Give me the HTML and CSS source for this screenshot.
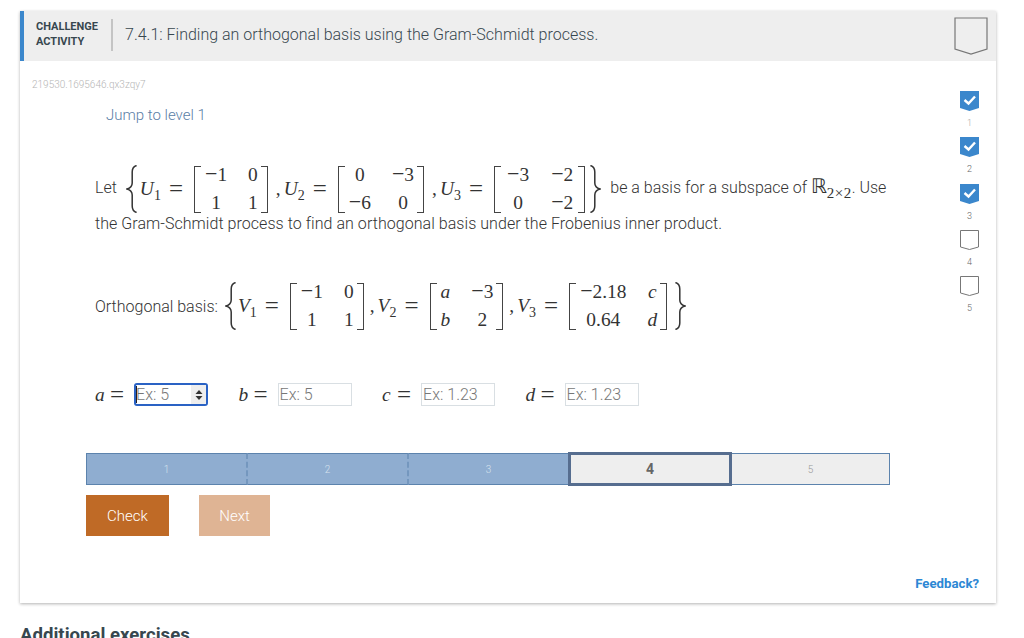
FILE: index.html
```html
<!DOCTYPE html>
<html lang="en">
<head>
<meta charset="utf-8">
<title>Challenge activity 7.4.1</title>
<link rel="stylesheet" href="styles.css">
</head>
<body>
<svg class="defs" width="0" height="0" aria-hidden="true">
  <symbol id="lbrace" viewBox="0 0 12 48" preserveAspectRatio="none"><path d="M10.6 .5C7.5 1.5 6.2 3.5 6.2 7V18C6.2 21 4.5 23 1 24C4.5 25 6.2 27 6.2 30V41C6.2 44.500 7.500 46.500 10.600 47.500" fill="none" stroke="#333" stroke-width="1.5"/></symbol>
  <symbol id="rbrace" viewBox="0 0 12 48" preserveAspectRatio="none"><path d="M1.400 .5C4.500 1.500 5.800 3.500 5.800 7V18C5.800 21 7.500 23 11 24C7.500 25 5.800 27 5.800 30V41C5.800 44.500 4.500 46.500 1.400 47.500" fill="none" stroke="#333" stroke-width="1.500"/></symbol>
</svg>
<main class="page">
  <section class="card">
    <header class="card-head">
      <div class="kind">CHALLENGE<br>ACTIVITY</div>
      <h1 class="title">7.4.1: Finding an orthogonal basis using the Gram-Schmidt process.</h1>
      <svg class="mark-big" viewBox="0 0 34 38"><path d="M1 1H33V32L17 37L1 32Z" fill="none" stroke="#777" stroke-width="1.200"/></svg>
    </header>
    <div class="card-body">
      <div class="content">
        <div class="code">219530.1695646.qx3zqy7</div>
        <div class="jump">Jump to level 1</div>
        <div class="stmt">
          <div class="line line-first">
            <span class="word">Let</span>
            <svg class="brace brace-l"><use href="#lbrace"/></svg>
            <span class="var">U<sub>1</sub></span><span class="eq">=</span>
            <span class="matrix">
              <span class="cell"><span class="minus">−</span>1</span><span class="cell">0</span>
              <span class="cell">1</span><span class="cell">1</span>
            </span>
            <span class="sep">,</span><span class="var">U<sub>2</sub></span><span class="eq">=</span>
            <span class="matrix">
              <span class="cell">0</span><span class="cell"><span class="minus">−</span>3</span>
              <span class="cell"><span class="minus">−</span>6</span><span class="cell">0</span>
            </span>
            <span class="sep">,</span><span class="var">U<sub>3</sub></span><span class="eq">=</span>
            <span class="matrix matrix-wide">
              <span class="cell"><span class="minus">−</span>3</span><span class="cell"><span class="minus">−</span>2</span>
              <span class="cell">0</span><span class="cell"><span class="minus">−</span>2</span>
            </span>
            <svg class="brace brace-r"><use href="#rbrace"/></svg>
            <span class="word tail">be a basis for a subspace of <span class="reals">ℝ<sub>2×2</sub></span>. Use</span>
          </div>
          <p class="line-second">the Gram-Schmidt process to find an orthogonal basis under the Frobenius inner product.</p>
        </div>
        <div class="line line-basis">
          <span class="word">Orthogonal basis:</span>
          <svg class="brace brace-l2"><use href="#lbrace"/></svg>
          <span class="var">V<sub>1</sub></span><span class="eq">=</span>
          <span class="matrix">
            <span class="cell"><span class="minus">−</span>1</span><span class="cell">0</span>
            <span class="cell">1</span><span class="cell">1</span>
          </span>
          <span class="sep">,</span><span class="var">V<sub>2</sub></span><span class="eq">=</span>
          <span class="matrix">
            <span class="cell it">a</span><span class="cell"><span class="minus">−</span>3</span>
            <span class="cell it">b</span><span class="cell">2</span>
          </span>
          <span class="sep">,</span><span class="var">V<sub>3</sub></span><span class="eq">=</span>
          <span class="matrix">
            <span class="cell"><span class="minus">−</span>2.18</span><span class="cell it">c</span>
            <span class="cell">0.64</span><span class="cell it">d</span>
          </span>
          <svg class="brace brace-r2"><use href="#rbrace"/></svg>
        </div>
        <div class="answers">
          <label class="answer"><span class="var a-var">a</span><span class="eq">=</span>
            <span class="field focused"><input class="box" type="text" placeholder="Ex: 5" aria-label="a"><span class="caret"></span><span class="spin"><svg viewBox="0 0 8 12" width="8" height="12"><path d="M4 1L7.500 5H.5Z M4 11L.5 7H7.500Z" fill="#333"/></svg></span></span></label>
          <label class="answer"><span class="var a-var">b</span><span class="eq">=</span><span class="field"><input class="box" type="text" placeholder="Ex: 5" aria-label="b"></span></label>
          <label class="answer"><span class="var a-var">c</span><span class="eq">=</span><span class="field"><input class="box" type="text" placeholder="Ex: 1.23" aria-label="c"></span></label>
          <label class="answer"><span class="var a-var">d</span><span class="eq">=</span><span class="field"><input class="box" type="text" placeholder="Ex: 1.23" aria-label="d"></span></label>
        </div>
        <div class="levels">
          <div class="level done">1</div>
          <div class="level done">2</div>
          <div class="level done last-done">3</div>
          <div class="level current">4</div>
          <div class="level todo">5</div>
        </div>
        <div class="actions">
          <button class="btn check" type="button">Check</button>
          <button class="btn next" type="button">Next</button>
        </div>
      </div>
      <aside class="marks">
        <div class="mark"><svg viewBox="0 0 19 20"><path d="M0 0H19V17L9.500 20L0 17Z" fill="#3b87cc"/><path d="M4.500 9L8.500 12.500L15 5.500" fill="none" stroke="#fff" stroke-width="2.400"/></svg><span class="num first">1</span></div>
        <div class="mark"><svg viewBox="0 0 19 20"><path d="M0 0H19V17L9.500 20L0 17Z" fill="#3b87cc"/><path d="M4.500 9L8.500 12.500L15 5.500" fill="none" stroke="#fff" stroke-width="2.400"/></svg><span class="num">2</span></div>
        <div class="mark"><svg viewBox="0 0 19 20"><path d="M0 0H19V17L9.500 20L0 17Z" fill="#3b87cc"/><path d="M4.500 9L8.500 12.500L15 5.500" fill="none" stroke="#fff" stroke-width="2.400"/></svg><span class="num">3</span></div>
        <div class="mark"><svg viewBox="0 0 19 20"><path d="M.5 .5H18.500V17L9.500 19.500L.5 17Z" fill="#fff" stroke="#777"/></svg><span class="num">4</span></div>
        <div class="mark"><svg viewBox="0 0 19 20"><path d="M.5 .5H18.500V17L9.500 19.500L.5 17Z" fill="#fff" stroke="#777"/></svg><span class="num">5</span></div>
      </aside>
      <a class="feedback" href="#">Feedback?</a>
    </div>
  </section>
  <h2 class="next-head">Additional exercises</h2>
</main>
</body>
</html>
```
FILE: styles.css
```css
* { box-sizing: border-box; }
html, body { margin: 0; height: 100%; overflow: hidden; background: #fff; }
body { font-family: Roboto, "Liberation Sans", sans-serif; font-weight: 300; color: #333; font-size: 16px; }
.defs { position: absolute; }
.page { padding: 11px 28px 0 20px; }

.card { height: 592px; background: #fff; box-shadow: 0 1px 3px rgba(0,0,0,.3); display: flex; flex-direction: column; }
.card-head { height: 50px; flex: none; background: #eee; border-left: 4px solid #3b87cc; display: flex; align-items: center; position: relative; }
.kind { width: 89px; height: 32px; margin-top: -2px; padding-left: 12px; font-size: 11px; font-weight: 700; line-height: 15px; color: #37474f; border-right: 2px solid #c4c4c4; white-space: nowrap; }
.title { margin: -3px 0 0 12px; font-size: 16px; font-weight: 300; color: #37474f; }
.mark-big { position: absolute; left: 930px; top: 6px; width: 34px; height: 38px; }

.card-body { flex: 1; position: relative; display: flex; }
.content { flex: 1; padding-left: 12px; min-width: 0; }
.code { margin-top: 18px; font-size: 10px; line-height: 12px; color: #b5b5b5; }
.jump { margin: 15px 0 0 74px; font-size: 15px; line-height: 18px; color: #5a7ea6; }

.stmt { margin: 0 0 0 63px; }
.line { display: flex; align-items: center; font-family: "Liberation Serif", serif; font-size: 19.400px; font-weight: 400; }
.line-first { margin-top: 41px; height: 48px; }
.word { font-family: Roboto, sans-serif; font-weight: 300; font-size: 16px; white-space: nowrap; line-height: 20px; }
.line-first .word { margin-top: -2px; }
.line-basis .word { margin-top: 1px; }
.tail { margin-left: 9px; }
.reals { font-family: "DejaVu Sans", sans-serif; font-weight: 400; font-size: 20px; line-height: 0; }
.reals sub { font-family: "Liberation Serif", serif; font-size: 15px; line-height: 0; letter-spacing: .5px; }
.line-second { margin: 1px 0 0; font-size: 16px; line-height: 20px; white-space: nowrap; letter-spacing: .05px; }
.line-basis { margin: 48px 0 0 63px; height: 48px; }

.brace { width: 12px; height: 48px; flex: none; }
.brace-l { margin-left: 9px; margin-right: 2px; }
.brace-r { margin-left: 4px; }
.brace-l2 { margin-left: 7px; margin-right: 1px; }
.brace-r2 { margin-left: 7px; }

.var { font-style: italic; white-space: nowrap; }
.var sub { font-style: normal; font-size: 14px; line-height: 0; }
.eq { margin: 0 11px 0 8px; font-size: 25px; line-height: 20px; }
.sep { margin: 0 3px 0 8px; }
.line-basis .sep { margin-left: 6px; }
.it { font-style: italic; }
.minus { font-size: 22px; line-height: 0; }

.matrix { position: relative; display: inline-grid; grid-template-columns: auto auto; column-gap: 21px; row-gap: 8px; padding: 0 10px 0 11px; height: 47px; align-content: center; justify-items: center; line-height: 20px; }
.matrix-wide { column-gap: 22px; padding: 0 12px 0 13px; }
.matrix::before, .matrix::after { content: ""; position: absolute; top: 0; bottom: 0; width: 6px; border: solid #444; border-width: 1.5px 0; }
.matrix::before { left: 0; border-left-width: 1.5px; }
.matrix::after { right: 0; border-right-width: 1.5px; }

.answers { display: flex; margin: 53px 0 0 63px; }
.answer { display: flex; align-items: center; width: 143.500px; font-family: "Liberation Serif", serif; font-size: 19.400px; font-weight: 400; }
.a-var { width: 15px; }
.answer .eq { margin: 0 10px 0 0; }
.field { position: relative; display: block; width: 74px; height: 23px; }
.box { display: block; width: 100%; height: 100%; border: 1px solid #d9dfe3; padding: 0 0 0 1px; margin: 0; font-family: Roboto, sans-serif; font-weight: 300; font-size: 16px; color: #333; outline: none; background: #fff; }
.box::placeholder { color: #777; opacity: 1; }
.focused .box { border: 2px solid #2a62c4; border-radius: 3px; padding-left: 0; }
.caret { position: absolute; left: 2px; top: 3px; width: 1px; height: 17px; background: #222; }
.spin { position: absolute; right: 2px; top: 2px; bottom: 2px; width: 15px; background: #eee; display: flex; align-items: center; justify-content: center; }

.levels { display: flex; margin: 47px 0 0 54px; width: 804px; height: 32px; }
.level { display: flex; align-items: center; justify-content: center; font-size: 10px; border: solid #5c83ad; border-width: 1px 0; }
.done { flex: none; width: 160.700px; background: #8fadd0; color: #d6e2ee; border-right: 2px dashed #7497be; }
.done:first-child { width: 162.200px; border-left: 1px solid #5c83ad; }
.last-done { width: 159.200px; border-right: 0; }
.current { flex: none; width: 164px; margin: -1px 0; height: 34px; background: #eee; border: 3px solid #566d8f; color: #666; font-size: 14px; font-weight: 700; }
.todo { flex: 1; background: #eee; color: #999; border: 1px solid #5c83ad; border-left: 0; }

.actions { display: flex; gap: 30px; margin: 10px 0 0 54px; }
.btn { height: 41px; padding: 0; border: 0; color: #fff; font-family: Roboto, sans-serif; font-weight: 300; font-size: 15px; }
.check { width: 83px; background: #bf6a26; }
.next { width: 71px; background: #dfb494; }

.marks { width: 45px; flex: none; display: flex; flex-direction: column; align-items: center; padding: 30px 8px 0 0; }
.mark { display: flex; flex-direction: column; align-items: center; height: 46.300px; }
.mark svg { width: 19px; height: 20px; display: block; }
.num { margin-top: 7px; font-size: 9px; line-height: 11px; color: #666; }
.num.first { color: #aaa; }

.feedback { position: absolute; right: 17px; bottom: 12px; font-size: 13.200px; font-weight: 700; color: #2c87d4; text-decoration: none; }
.next-head { margin: 21px 0 0; font-size: 18.600px; font-weight: 700; color: #37474f; }
```
